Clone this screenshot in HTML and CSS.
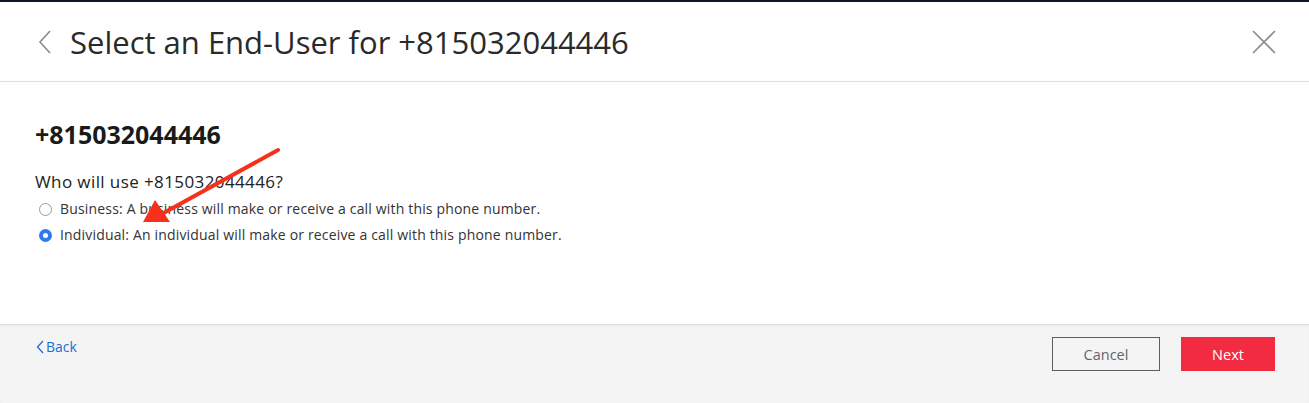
FILE: index.html
```html
<!DOCTYPE html>
<html>
<head>
<meta charset="utf-8">
<link rel="stylesheet" href="styles.css">
</head>
<body>
<div class="modal">
  <header class="header">
    <div class="header-left">
      <svg class="back-chev" width="14" height="24" viewBox="0 0 14 24"><path d="M12 1 L2 12 L12 23" fill="none" stroke="#8a8a8a" stroke-width="1.6"/></svg>
      <h1 class="title">Select an End-User for +815032044446</h1>
    </div>
    <svg class="close" width="24" height="24" viewBox="0 0 24 24"><path d="M1 1 L23 23 M23 1 L1 23" fill="none" stroke="#8a8a8a" stroke-width="1.6"/></svg>
  </header>
  <main class="body">
    <h2 class="number">+815032044446</h2>
    <p class="question">Who will use +815032044446?</p>
    <label class="option"><span class="radio"></span>Business: A business will make or receive a call with this phone number.</label>
    <label class="option"><span class="radio checked"></span>Individual: An individual will make or receive a call with this phone number.</label>
    <svg class="arrow" width="160" height="90" viewBox="0 0 160 90"><line x1="148" y1="5" x2="30" y2="70" stroke="#f5311c" stroke-width="4" stroke-linecap="round"/><polygon points="13,77 25,55 40,77" fill="#f5311c"/></svg>
  </main>
  <footer class="footer">
    <a class="back-link"><svg width="8" height="14" viewBox="0 0 8 14"><path d="M7 1 L1.5 7 L7 13" fill="none" stroke="#1d6ed8" stroke-width="1.3"/></svg>Back</a>
    <div class="actions">
      <button class="btn cancel">Cancel</button>
      <button class="btn next">Next</button>
    </div>
  </footer>
</div>
</body>
</html>
```
FILE: styles.css
```css
* { box-sizing: border-box; }
html, body { margin: 0; padding: 0; }
body {
  font-family: "Open Sans", "Noto Sans", sans-serif;
  color: #222;
  background: #f4f4f4;
  width: 1309px;
  height: 403px;
  overflow: hidden;
}
.modal { display: flex; flex-direction: column; height: 403px; }
.header {
  height: 82px;
  border-top: 2px solid #0d1426;
  border-bottom: 1px solid #e0e0e0;
  background: #fff;
  display: flex;
  align-items: center;
  justify-content: space-between;
  padding: 0 33px 0 38px;
}
.header-left { display: flex; align-items: center; gap: 18px; }
.back-chev { display: block; }
.title {
  margin: 0;
  font-weight: 400;
  font-size: 31px;
  color: #2a2a2a;
}
.close { display: block; }
.body {
  position: relative;
  background: #fff;
  height: 242px;
  padding: 36px 35px 0;
}
.number {
  margin: 0;
  font-size: 25px;
  font-weight: 700;
  line-height: 32px;
  color: #1a1a1a;
}
.question {
  margin: 21px 0 3px;
  font-size: 17px;
  letter-spacing: 0.4px;
  line-height: 22px;
  color: #222;
}
.option {
  display: flex;
  align-items: center;
  font-size: 14px;
  letter-spacing: 0.17px;
  line-height: 26px;
  color: #333;
  padding-left: 4px;
}
.radio {
  width: 13px;
  height: 13px;
  border-radius: 50%;
  border: 1px solid #9a9a9a;
  background: #fff;
  margin-right: 8px;
  flex: none;
}
.radio.checked {
  border: 4px solid #2f7bea;
  background: #fff;
}
.arrow { position: absolute; left: 130px; top: 63px; }
.footer {
  flex: 1;
  background: #f4f4f4;
  border-top: 1px solid #dcdcdc;
  box-shadow: inset 0 1px 2px rgba(0,0,0,0.04);
  display: flex;
  justify-content: space-between;
  align-items: flex-start;
  padding: 12px 34px 0 36px;
}
.back-link {
  display: flex;
  align-items: center;
  gap: 2px;
  color: #1d6ed8;
  font-size: 14px;
  line-height: 20px;
}
.actions { display: flex; gap: 21px; }
.btn {
  font-family: inherit;
  font-size: 14.5px;
  height: 34px;
  padding: 0;
  cursor: pointer;
}
.cancel {
  width: 108px;
  background: transparent;
  border: 1px solid #5e5e5e;
  color: #666;
}
.next {
  width: 94px;
  background: #f22b40;
  border: none;
  color: #fff;
  font-weight: 500;
}
```
